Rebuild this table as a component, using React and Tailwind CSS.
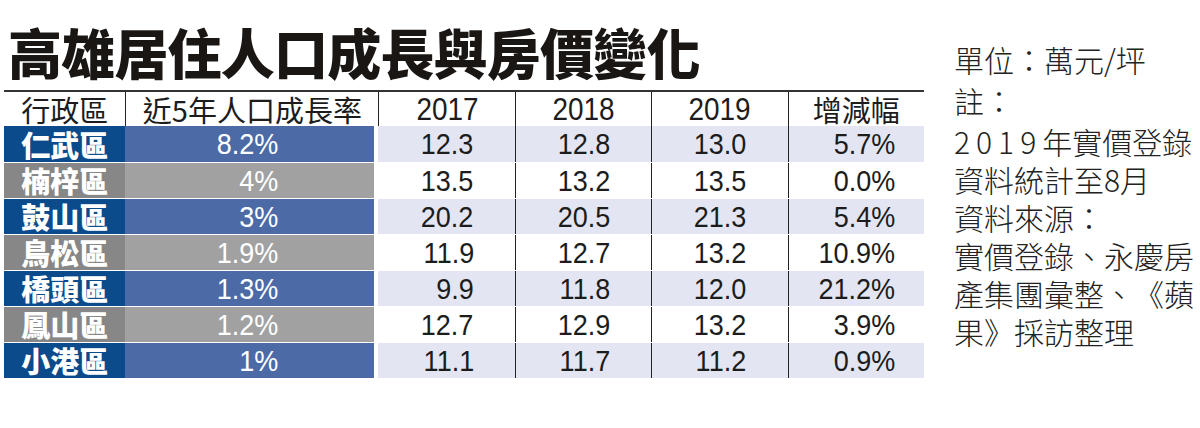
const rows = [
  ["仁武區", "8.2%", "12.3", "12.8", "13.0", "5.7%"],
  ["楠梓區", "4%", "13.5", "13.2", "13.5", "0.0%"],
  ["鼓山區", "3%", "20.2", "20.5", "21.3", "5.4%"],
  ["鳥松區", "1.9%", "11.9", "12.7", "13.2", "10.9%"],
  ["橋頭區", "1.3%", "9.9", "11.8", "12.0", "21.2%"],
  ["鳳山區", "1.2%", "12.7", "12.9", "13.2", "3.9%"],
  ["小港區", "1%", "11.1", "11.7", "11.2", "0.9%"],
];

const cjk = "font-['Noto_Sans_CJK_TC','Noto_Sans_CJK_SC',sans-serif]";
const num = "font-['Liberation_Sans','Noto_Sans_CJK_TC',sans-serif]";

// narrow the digits a little, the print font is a condensed one
const Num = ({ children, origin = "origin-right" }) => (
  <span className={`inline-block scale-x-90 ${origin}`}>{children}</span>
);

const Row = ({ row, i }) => {
  const blue = i % 2 === 0;
  const [name, rate, a, b, c, d] = row;
  const stripe = blue ? "bg-[#e3e6f2]" : "bg-white";
  const cell = `flex items-center justify-end text-[30px] leading-none text-[#1c1c1c] ${num} ${stripe}`;
  return (
    <div className={`flex h-[36px] ${i > 0 ? "border-t border-white/40" : ""}`}>
      <div
        className={`w-[122px] flex items-center justify-center text-white font-black text-[29px] leading-none ${cjk} ${
          blue ? "bg-[#0b4a8b]" : "bg-[#878787]"
        }`}
      >
        {name}
      </div>
      <div
        className={`w-[250px] flex items-center justify-end pr-[96px] text-white text-[30px] leading-none ${num} ${
          blue ? "bg-[#4c6aa6]" : "bg-[#a1a1a1]"
        }`}
      >
        <Num>{rate}</Num>
      </div>
      <div className={`w-[141px] border-l-4 border-white pr-[41px] ${cell}`}>
        <Num>{a}</Num>
      </div>
      <div className={`w-[137px] border-l border-[#222] pr-[41px] ${cell}`}>
        <Num>{b}</Num>
      </div>
      <div className={`w-[137px] border-l border-[#222] pr-[41px] ${cell}`}>
        <Num>{c}</Num>
      </div>
      <div className={`w-[137px] border-l border-[#222] pr-[29px] ${cell}`}>
        <Num>{d}</Num>
      </div>
    </div>
  );
};

export default function App() {
  return (
    <div className="w-[1200px] h-[428px] bg-white flex overflow-hidden">
      <div className="pl-[4px] w-[928px]">
        <h1 className={`pt-[25px] pl-[4px] text-[54px] leading-[54px] tracking-[-0.8px] font-black text-[#1a1614] ${cjk}`}>
          高雄居住人口成長與房價變化
        </h1>

        <div className="mt-[11px] w-[920px]">
          <div className="flex h-[36px] border-t-2 border-[#333] text-[#1c1c1c] leading-none">
            <div className={`w-[122px] flex items-center justify-center text-[29px] ${cjk}`}>行政區</div>
            <div className={`w-[254px] border-l border-[#222] flex items-center justify-center text-[29px] ${cjk}`}>
              近5年人口成長率
            </div>
            <div className={`w-[137px] border-l border-[#222] flex items-center justify-center text-[31px] ${num}`}>
              <Num origin="origin-center">2017</Num>
            </div>
            <div className={`w-[137px] border-l border-[#222] flex items-center justify-center text-[31px] ${num}`}>
              <Num origin="origin-center">2018</Num>
            </div>
            <div className={`w-[137px] border-l border-[#222] flex items-center justify-center text-[31px] ${num}`}>
              <Num origin="origin-center">2019</Num>
            </div>
            <div className={`w-[137px] border-l border-[#222] flex items-center justify-center text-[29px] ${cjk}`}>
              增減幅
            </div>
          </div>
          {rows.map((r, i) => (
            <Row key={r[0]} row={r} i={i} />
          ))}
        </div>
      </div>

      <div
        className={`pl-[26px] pt-[40px] text-[30px] leading-[38px] font-light text-[#222] whitespace-nowrap [text-spacing-trim:space-all] ${cjk}`}
      >
        <p>單位：萬元/坪</p>
        <p className="mt-[3px]">註：</p>
        <p className="mt-[3px]">
          <span className="tracking-[6px]">2019</span>年實價登錄
        </p>
        <p>資料統計至8月</p>
        <p>資料來源：</p>
        <p>實價登錄、永慶房</p>
        <p>產集團彙整、《蘋</p>
        <p>果》採訪整理</p>
      </div>
    </div>
  );
}
